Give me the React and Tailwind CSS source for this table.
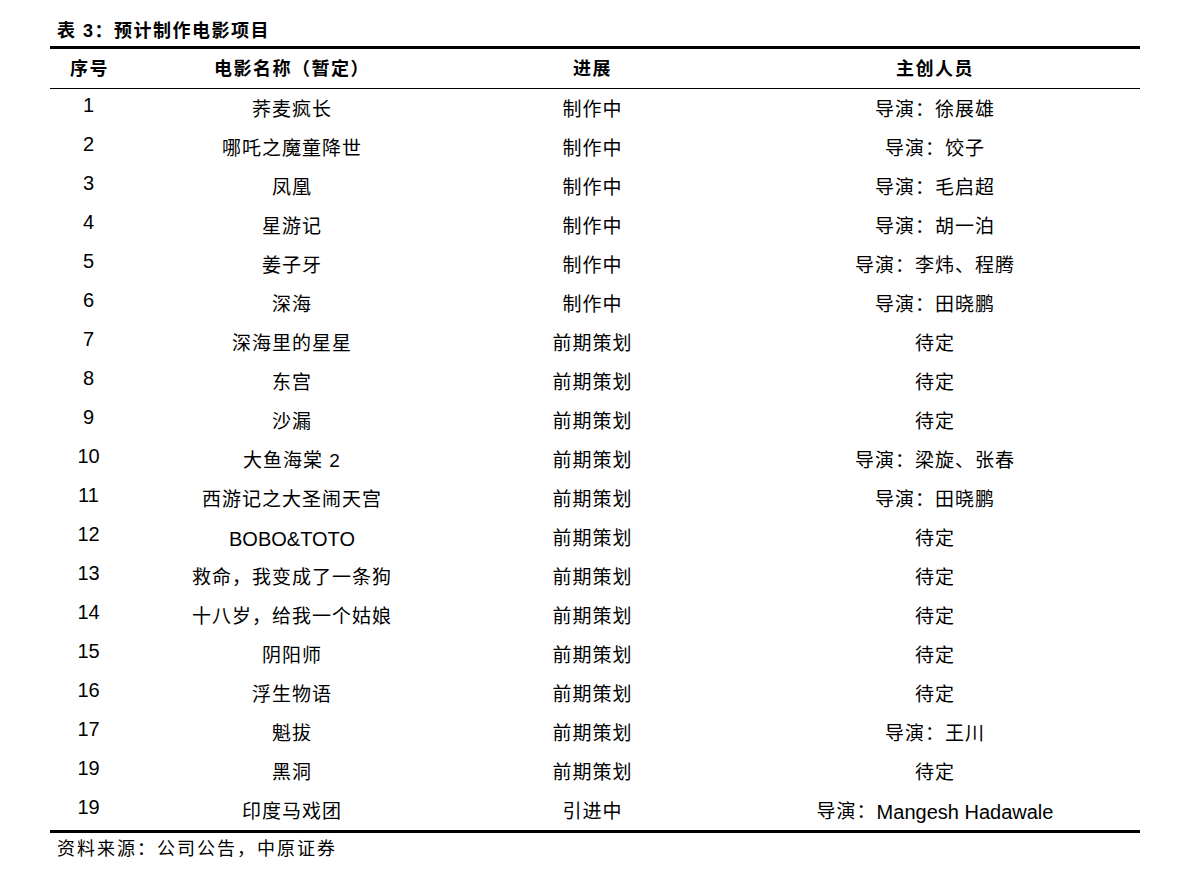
import React from 'react'

const rows = [
  ['1', '荞麦疯长', '制作中', '导演：徐展雄'],
  ['2', '哪吒之魔童降世', '制作中', '导演：饺子'],
  ['3', '凤凰', '制作中', '导演：毛启超'],
  ['4', '星游记', '制作中', '导演：胡一泊'],
  ['5', '姜子牙', '制作中', '导演：李炜、程腾'],
  ['6', '深海', '制作中', '导演：田晓鹏'],
  ['7', '深海里的星星', '前期策划', '待定'],
  ['8', '东宫', '前期策划', '待定'],
  ['9', '沙漏', '前期策划', '待定'],
  ['10', '大鱼海棠 2', '前期策划', '导演：梁旋、张春'],
  ['11', '西游记之大圣闹天宫', '前期策划', '导演：田晓鹏'],
  ['12', 'BOBO&TOTO', '前期策划', '待定'],
  ['13', '救命，我变成了一条狗', '前期策划', '待定'],
  ['14', '十八岁，给我一个姑娘', '前期策划', '待定'],
  ['15', '阴阳师', '前期策划', '待定'],
  ['16', '浮生物语', '前期策划', '待定'],
  ['17', '魁拔', '前期策划', '导演：王川'],
  ['19', '黑洞', '前期策划', '待定'],
  ['19', '印度马戏团', '引进中', '导演：', 'Mangesh Hadawale'],
]

const font = { fontFamily: '"Liberation Sans", "Noto Sans CJK SC", sans-serif' }

const App = () => {
  return (
    <div className="w-[1191px] h-[880px] bg-white text-black" style={font}>
      <div className="ml-[50px] w-[1090px] pt-[20px]">
        <div className="pl-[7px] h-[22px] leading-[22px] text-[18px] font-bold tracking-[1.5px]">
          表 3：预计制作电影项目
        </div>
        <div className="mt-[4px] border-t-[3px] border-b-[3px] border-black">
          <div className="grid grid-cols-[79px_326px_275px_410px] h-[40px] border-b border-black text-[18px] font-bold tracking-[1.5px]">
            <div className="flex items-center justify-center pt-[1px]">序号</div>
            <div className="flex items-center justify-center pt-[1px]">电影名称（暂定）</div>
            <div className="flex items-center justify-center pt-[1px]">进展</div>
            <div className="flex items-center justify-center pt-[1px]">主创人员</div>
          </div>
          {rows.map((r, i) => (
            <div key={i} className="grid grid-cols-[79px_326px_275px_410px] h-[39px] text-[19px]">
              <div className="flex items-center justify-center pb-[8px] pr-[2px] text-[20px]">{r[0]}</div>
              <div className={'flex items-center justify-center pt-[3px] ' + (r[1] === 'BOBO&TOTO' ? 'text-[20px]' : 'tracking-[1px]')}>{r[1]}</div>
              <div className="flex items-center justify-center pt-[3px] tracking-[1px]">{r[2]}</div>
              <div className="flex items-center justify-center pt-[3px]">
                <span className="tracking-[1px]">{r[3]}</span>
                {r[4] && <span className="text-[20px]">{r[4]}</span>}
              </div>
            </div>
          ))}
        </div>
        <div className="pl-[7px] pt-[4px] leading-[24px] text-[18px] tracking-[2px]">
          资料来源：公司公告，中原证券
        </div>
      </div>
    </div>
  )
}

export default App
